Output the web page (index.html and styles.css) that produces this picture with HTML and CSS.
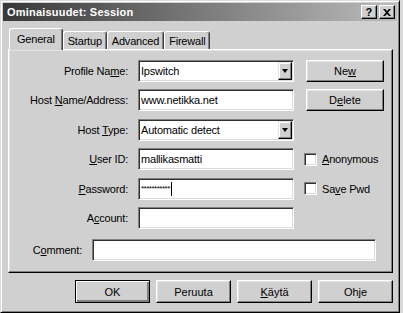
FILE: index.html
```html
<!doctype html>
<html lang="fi">
<head>
    <meta charset="UTF-8">
    <title>Ominaisuudet: Session</title>
    <link rel="stylesheet" href="styles.css">
</head>
<body>
    <div class="window">
        <div class="titlebar">
            <span class="title">Ominaisuudet: Session</span>
            <div class="caption-btns">
                <span class="cap-btn">?</span>
                <span class="cap-btn close">
                    <svg width="8" height="7" viewBox="0 0 8 7"><path d="M0 0h2l2 2 2-2h2L5 3.5 8 7H6L4 5 2 7H0l3-3.5z" fill="#000"/></svg>
                </span>
            </div>
        </div>

        <div class="tabs">
            <div class="tab active">General</div>
            <div class="tab">Startup</div>
            <div class="tab">Advanced</div>
            <div class="tab">Firewall</div>
        </div>

        <div class="panel">
            <div class="form-grid">
                <label class="lbl">Profile Na<u>m</u>e:</label>
                <div class="field combo"><span class="value">Ipswitch</span><span class="drop"></span></div>
                <button class="btn side">Ne<u>w</u></button>

                <label class="lbl">Host <u>N</u>ame/Address:</label>
                <div class="field"><span class="value">www.netikka.net</span></div>
                <button class="btn side">D<u>e</u>lete</button>

                <label class="lbl">Host <u>T</u>ype:</label>
                <div class="field combo"><span class="value">Automatic detect</span><span class="drop"></span></div>
                <span></span>

                <label class="lbl"><u>U</u>ser ID:</label>
                <div class="field"><span class="value">mallikasmatti</span></div>
                <div class="check"><span class="box"></span><span><u>A</u>nonymous</span></div>

                <label class="lbl"><u>P</u>assword:</label>
                <div class="field"><span class="value secret">***********</span><span class="caret"></span></div>
                <div class="check"><span class="box"></span><span>Sa<u>v</u>e Pwd</span></div>

                <label class="lbl">A<u>c</u>count:</label>
                <div class="field"></div>
                <span></span>
            </div>

            <div class="comment-row">
                <label class="lbl">C<u>o</u>mment:</label>
                <div class="field wide"></div>
            </div>
        </div>

        <div class="footer">
            <button class="btn default">OK</button>
            <button class="btn">Peruuta</button>
            <button class="btn"><u>K</u>äytä</button>
            <button class="btn">Ohje</button>
        </div>
    </div>
</body>
</html>
```

FILE: styles.css
```css
* {
    box-sizing: border-box;
}

body {
    margin: 0;
    background: #d8d8d8;
    font-family: "Liberation Sans", Arial, sans-serif;
    font-size: 11px;
    letter-spacing: -0.2px;
    color: #000;
}

u {
    text-decoration: underline;
    text-underline-offset: 1px;
}

.window {
    width: 400px;
    height: 313px;
    padding: 2px;
    background: #d0d0d0;
    border: 1px solid;
    border-color: #dcdcdc #000 #000 #dcdcdc;
    box-shadow: inset 1px 1px #fff, inset -1px -1px #808080;
}

/* title bar */
.titlebar {
    display: flex;
    align-items: center;
    justify-content: space-between;
    height: 18px;
    padding: 0 2px 0 4px;
    background: linear-gradient(to right, #383838, #bcbcbc);
    color: #fff;
    font-weight: bold;
    letter-spacing: 0.2px;
}

.caption-btns {
    display: flex;
    gap: 2px;
}

.cap-btn {
    display: flex;
    align-items: center;
    justify-content: center;
    width: 16px;
    height: 14px;
    background: #d0d0d0;
    border: 1px solid;
    border-color: #fff #000 #000 #fff;
    box-shadow: inset -1px -1px #808080;
    color: #000;
    font-size: 11px;
    font-weight: bold;
}

/* tabs */
.tabs {
    display: flex;
    align-items: flex-end;
    height: 21px;
    margin: 7px 0 0 5px;
    padding-left: 3px;
}

.tab {
    height: 18px;
    padding: 3px 4px 0;
    border: 1px solid;
    border-bottom: 0;
    border-color: #fff #404040 #fff #fff;
    border-radius: 3px 3px 0 0;
    box-shadow: inset -1px 0 #808080;
    background: #d0d0d0;
}

.tab.active {
    position: relative;
    z-index: 1;
    height: 22px;
    margin: 0 0 -1px -2px;
    padding: 4px 7px 0;
}

/* panel */
.panel {
    height: 224px;
    margin: 0 4px 0 5px;
    padding-top: 10px;
    border: 1px solid;
    border-color: #fff #000 #000 #fff;
    box-shadow: inset -1px -1px #808080, inset 1px 1px #e4e4e4;
}

.form-grid {
    display: grid;
    grid-template-columns: 119px 156px 86px;
    grid-auto-rows: 22px;
    column-gap: 10px;
    row-gap: 7.4px;
    align-items: center;
}

.lbl {
    text-align: right;
    white-space: nowrap;
}

.field {
    display: flex;
    align-items: center;
    height: 22px;
    padding-left: 2px;
    background: #fff;
    border: 1px solid;
    border-color: #808080 #fff #fff #808080;
    box-shadow: inset 1px 1px #303030, inset -1px -1px #dcdcdc;
}

.combo .value {
    flex: 1;
}

.drop {
    align-self: stretch;
    width: 14px;
    margin: 1px 1px 1px 0;
    background: #d0d0d0;
    border: 1px solid;
    border-color: #e4e4e4 #000 #000 #e4e4e4;
    box-shadow: inset -1px -1px #808080, inset 1px 1px #fff;
    display: flex;
    align-items: center;
    justify-content: center;
}

.drop::after {
    content: "";
    border-left: 3.5px solid transparent;
    border-right: 3.5px solid transparent;
    border-top: 4px solid #000;
}

.secret {
    font-size: 8px;
    letter-spacing: -0.5px;
}

.caret {
    width: 1px;
    height: 14px;
    margin-left: 1px;
    background: #000;
}

.check {
    display: flex;
    align-items: center;
    gap: 5px;
}

.box {
    width: 13px;
    height: 13px;
    background: #fff;
    border: 1px solid;
    border-color: #808080 #fff #fff #808080;
    box-shadow: inset 1px 1px #303030, inset -1px -1px #dcdcdc;
}

.comment-row {
    display: flex;
    align-items: center;
    gap: 10px;
    margin: 10px 0 0 22px;
}

.comment-row .lbl {
    width: 51px;
}

.field.wide {
    width: 284px;
}

/* buttons */
.btn {
    width: 75px;
    height: 23px;
    padding: 0;
    background: #d0d0d0;
    border: 1px solid;
    border-color: #fff #000 #000 #fff;
    box-shadow: inset -1px -1px #808080, inset 1px 1px #e4e4e4;
    font: inherit;
    color: #000;
}

.btn.side {
    width: 78px;
    height: 22px;
    margin-left: 2px;
}

.btn.default {
    border: 1px solid #000;
    box-shadow: inset 1px 1px #fff, inset -2px -2px #808080;
}

.footer {
    display: flex;
    justify-content: flex-end;
    gap: 6px;
    margin-top: 7px;
    padding-right: 4px;
}
```
